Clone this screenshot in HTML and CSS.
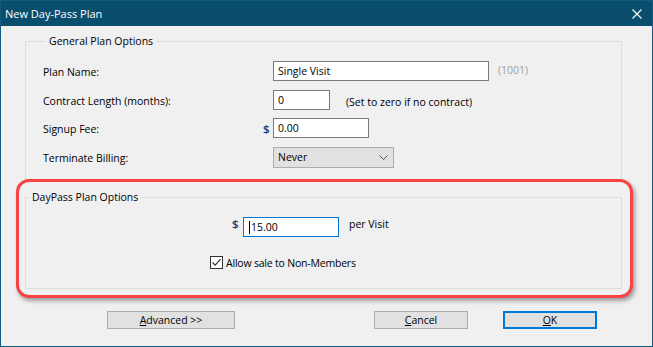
FILE: index.html
```html
<!DOCTYPE html>
<html lang="en">
<head>
    <meta charset="utf-8">
    <title>New Day-Pass Plan</title>
    <link rel="stylesheet" href="styles.css">
</head>
<body>
    <div class="window">
        <div class="titlebar">
            <span class="title">New Day-Pass Plan</span>
            <svg class="close" width="10" height="10" viewBox="0 0 10 10">
                <path d="M0.5 0.5 L9.5 9.5 M9.5 0.5 L0.5 9.5" stroke="#ffffff" stroke-width="1.1" fill="none"/>
            </svg>
        </div>
        <div class="content">
            <fieldset class="group general">
                <legend>General Plan Options</legend>
                <div class="rows">
                    <div class="row">
                        <span class="lbl">Plan Name:</span>
                        <span class="cur"></span>
                        <div class="textbox w-name">Single Visit</div>
                        <span class="hint grey">(1001)</span>
                    </div>
                    <div class="row">
                        <span class="lbl">Contract Length (months):</span>
                        <span class="cur"></span>
                        <div class="textbox w-months">0</div>
                        <span class="hint wide">(Set to zero if no contract)</span>
                    </div>
                    <div class="row">
                        <span class="lbl">Signup Fee:</span>
                        <span class="cur">$</span>
                        <div class="textbox w-fee">0.00</div>
                    </div>
                    <div class="row">
                        <span class="lbl">Terminate Billing:</span>
                        <span class="cur"></span>
                        <div class="combo">
                            <span>Never</span>
                            <svg width="9" height="5" viewBox="0 0 9 5">
                                <path d="M0.5 0.5 L4.5 4.5 L8.5 0.5" stroke="#555555" stroke-width="1" fill="none"/>
                            </svg>
                        </div>
                    </div>
                </div>
            </fieldset>

            <div class="highlight">
                <fieldset class="group daypass">
                    <legend>DayPass Plan Options</legend>
                    <div class="price-row">
                        <span class="cur-inline">$</span>
                        <div class="textbox w-price focused"><span class="caret"></span>15.00</div>
                        <span class="per">per Visit</span>
                    </div>
                    <div class="check-row">
                        <span class="checkbox">
                            <svg width="11" height="11" viewBox="0 0 11 11">
                                <path d="M1.5 5.5 L4.2 8.2 L9.5 2.2" stroke="#333333" stroke-width="1.2" fill="none"/>
                            </svg>
                        </span>
                        <span class="check-label">Allow sale to Non-Members</span>
                    </div>
                </fieldset>
            </div>

            <div class="buttons">
                <div class="btn btn-advanced"><u>A</u>dvanced &gt;&gt;</div>
                <div class="btn btn-cancel"><u>C</u>ancel</div>
                <div class="btn btn-ok"><u>O</u>K</div>
            </div>
        </div>
    </div>
</body>
</html>
```

FILE: styles.css
```css
*{
    margin: 0;
    padding: 0;
    box-sizing: border-box;
}
body{
    background-color: #f0f0f0;
    font-family: "Open Sans", "Liberation Sans", sans-serif;
    font-size: 10.5px;
    color: #000000;
}
.window{
    width: 653px;
    height: 347px;
    border: 1px solid #145a80;
    background-color: #f0f0f0;
}
.titlebar{
    height: 25px;
    background-color: #0a4e6e;
    display: flex;
    align-items: center;
    justify-content: space-between;
    padding: 0 10px 0 4px;
}
.title{
    color: #ffffff;
    font-size: 11px;
}
.close{
    display: block;
}

/* group boxes */
.group{
    border: 1px solid #dcdcdc;
    min-width: 0;
}
.group legend{
    line-height: 14px;
    padding: 0 3px;
    margin-left: 3px;
}
.general{
    width: 597px;
    margin: 8px 0 0 24px;
    padding: 13px 0 18px 17px;
}
.rows{
    display: flex;
    flex-direction: column;
    gap: 8.7px;
}
.row{
    display: flex;
    align-items: center;
    height: 20px;
}
.lbl{
    width: 220px;
    padding-top: 2px;
}
.cur,
.cur-inline{
    width: 10px;
    color: #1a3870;
    font-size: 11.5px;
    font-weight: 600;
}
.hint{
    margin-left: 9px;
    padding-top: 1px;
}
.hint.wide{
    margin-left: 16px;
    padding-top: 4px;
}
.grey{
    color: #a0a0a0;
    padding-top: 0;
    margin-top: -2px;
}

/* controls */
.textbox{
    height: 20px;
    border: 1px solid #7a7a7a;
    background-color: #ffffff;
    padding-left: 4px;
    line-height: 18px;
    display: flex;
    align-items: center;
}
.w-name{ width: 216px; }
.w-months{ width: 57px; }
.w-fee{ width: 96px; }
.w-price{ width: 96px; }
.focused{
    border-color: #0078d7;
    padding-left: 5px;
}
.caret{
    width: 1px;
    height: 13px;
    background-color: #000000;
    margin-right: 1px;
}
.combo{
    width: 121px;
    height: 21px;
    border: 1px solid #adadad;
    background-color: #e1e1e1;
    display: flex;
    align-items: center;
    justify-content: space-between;
    padding: 0 5px 0 4px;
}
.combo svg{
    display: block;
}

/* highlighted block */
.highlight{
    width: 617px;
    margin: -7px 0 0 15px;
    border: 3px solid #fa4444;
    border-radius: 13px;
    background-color: #f0f0f0;
    box-shadow: 2px 3px 4px rgba(0,0,0,0.35);
    padding: 0 9px 6px 6px;
    position: relative;
}
.daypass{
    width: 597px;
    margin-top: 8px;
    padding: 13px 0 19px 0;
}
.price-row{
    display: flex;
    align-items: flex-start;
    height: 20px;
    margin-left: 206px;
}
.cur-inline{
    width: 11px;
    line-height: 14px;
}
.per{
    margin-left: 10px;
    line-height: 14px;
}
.check-row{
    display: flex;
    align-items: center;
    height: 13px;
    margin: 19px 0 0 184px;
}
.check-label{
    letter-spacing: -0.2px;
}
.checkbox{
    width: 13px;
    height: 13px;
    border: 1px solid #333333;
    background-color: #ffffff;
    margin-right: 3px;
    display: flex;
    align-items: center;
    justify-content: center;
}
.checkbox svg{
    display: block;
}

/* buttons */
.buttons{
    display: flex;
    margin-top: 13px;
}
.btn{
    height: 18px;
    border: 1px solid #adadad;
    background-color: #e1e1e1;
    display: flex;
    align-items: center;
    justify-content: center;
}
.btn-advanced{
    width: 128px;
    margin-left: 106px;
}
.btn-cancel{
    width: 94px;
    margin-left: 139px;
}
.btn-ok{
    width: 94px;
    margin-left: 35px;
    border: 2px solid #0078d7;
}
```
